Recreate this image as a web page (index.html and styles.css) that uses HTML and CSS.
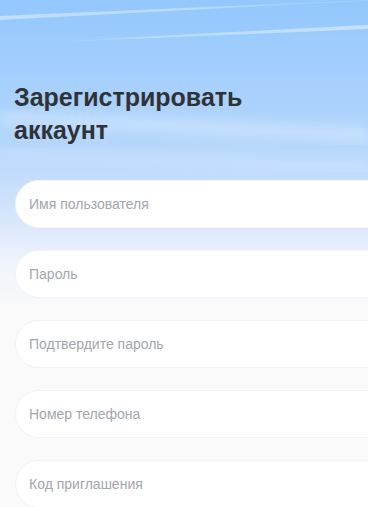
FILE: index.html
```html
<!DOCTYPE html>
<html lang="ru">
<head>
    <meta charset="UTF-8">
    <meta name="viewport" content="width=device-width, initial-scale=1.0">
    <title>Регистрация</title>
    <link rel="stylesheet" href="styles.css">
</head>
<body>
    <div class="page">
        <svg class="sky" width="368" height="260" viewBox="0 0 368 260" preserveAspectRatio="none">
            <defs>
                <linearGradient id="streak" x1="0" x2="1" y1="0" y2="0">
                    <stop offset="0" stop-color="#fff" stop-opacity="0.4"/>
                    <stop offset="0.5" stop-color="#fff" stop-opacity="0.35"/>
                    <stop offset="1" stop-color="#fff" stop-opacity="0.1"/>
                </linearGradient>
                <linearGradient id="streak2" x1="0" x2="1" y1="0" y2="0">
                    <stop offset="0" stop-color="#fff" stop-opacity="0"/>
                    <stop offset="0.3" stop-color="#fff" stop-opacity="0.3"/>
                    <stop offset="1" stop-color="#fff" stop-opacity="0.45"/>
                </linearGradient>
                <filter id="soft"><feGaussianBlur stdDeviation="6"/></filter>
                <filter id="thin"><feGaussianBlur stdDeviation="0.6"/></filter>
            </defs>
            <polygon points="0,16 0,20 300,4 368,1 368,0" fill="url(#streak)" filter="url(#thin)"/>
            <polygon points="60,41 368,25 368,29 60,42" fill="url(#streak2)" filter="url(#thin)"/>
            <polygon points="0,112 368,128 368,142 0,124" fill="#fff" fill-opacity="0.3" filter="url(#soft)"/>
            <polygon points="0,150 368,162 368,170 0,158" fill="#fff" fill-opacity="0.2" filter="url(#soft)"/>
        </svg>

        <h1 class="title">Зарегистрировать<br>аккаунт</h1>

        <form class="form">
            <div class="field"><input type="text" placeholder="Имя пользователя"></div>
            <div class="field"><input type="password" placeholder="Пароль"></div>
            <div class="field"><input type="password" placeholder="Подтвердите пароль"></div>
            <div class="field"><input type="tel" placeholder="Номер телефона"></div>
            <div class="field"><input type="text" placeholder="Код приглашения"></div>
        </form>
    </div>
</body>
</html>
```

FILE: styles.css
```css
html, body {
    margin: 0;
    padding: 0;
}
body {
    background-color: #fafafa;
    font-family: "Liberation Sans", Arial, sans-serif;
}
.page {
    position: relative;
    width: 368px;
    height: 507px;
    overflow: hidden;
    padding: 81px 0 0 15px;
    box-sizing: border-box;
    background: linear-gradient(180deg, #93c7fd 0%, #b4d6fc 28%, #d4e4fb 42%, #f1f4fc 52%, #fafafa 62%, #fafafa 100%);
}
.sky {
    position: absolute;
    left: 0;
    top: 0;
}
.title {
    position: relative;
    margin: 0 0 33px -1px;
    font-size: 25px;
    line-height: 33px;
    font-weight: 700;
    color: #303236;
}
.form {
    position: relative;
    display: flex;
    flex-direction: column;
    gap: 22px;
    width: 380px;
}
.field input {
    display: block;
    width: 100%;
    height: 48px;
    box-sizing: border-box;
    padding: 0 13px;
    border: 1px solid #f3f3f5;
    border-radius: 24px;
    background-color: #fff;
    font-family: "Liberation Sans", Arial, sans-serif;
    font-size: 14px;
    color: #333;
    outline: none;
}
.field input::placeholder {
    color: #a3a6ad;
}
```
